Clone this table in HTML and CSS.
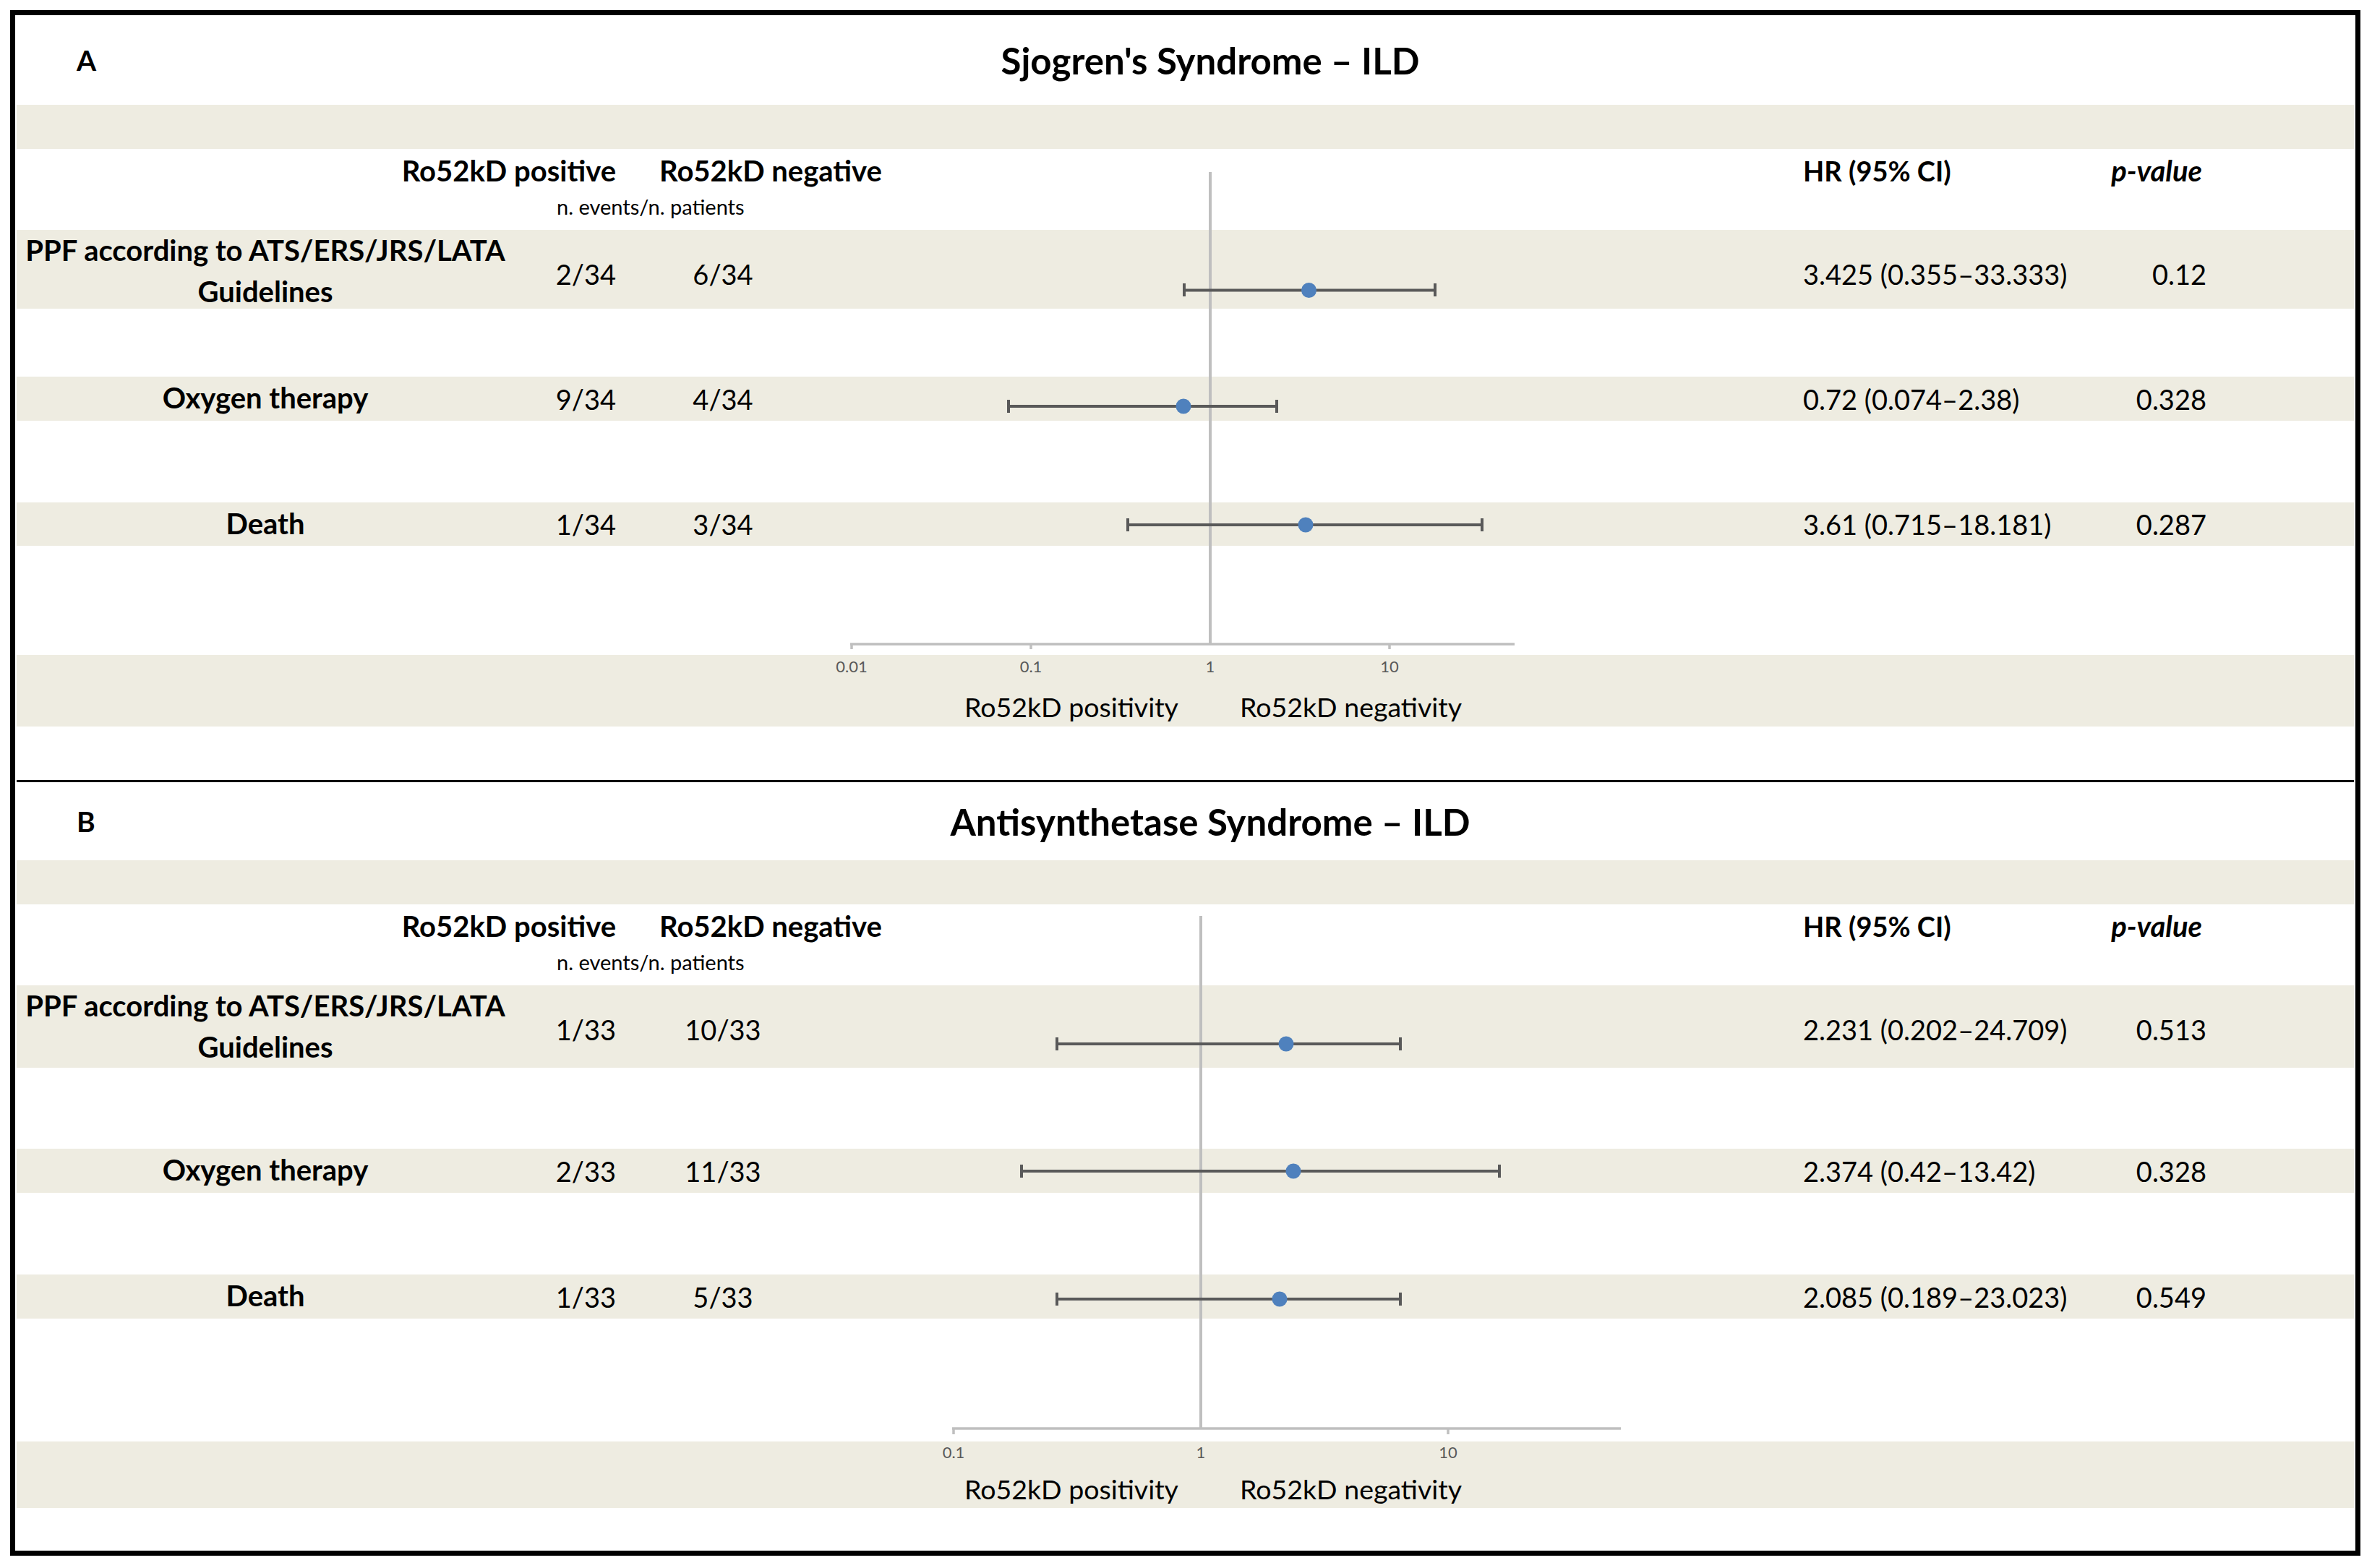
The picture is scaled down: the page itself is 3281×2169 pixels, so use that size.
FILE: index.html
```html
<!DOCTYPE html>
<html lang="en">
<head>
<meta charset="utf-8">
<title>Ro52kD forest plots</title>
<link rel="stylesheet" href="styles.css">
</head>
<body>
<div class="frame">
  <section class="panel panel-a">
    <svg class="plot" width="3233" height="1058" viewBox="23 21 3233 1058" xmlns="http://www.w3.org/2000/svg">
      <g class="grid-lines">
        <line class="ref" x1="1674" y1="238" x2="1674" y2="891"/>
        <line x1="1176" y1="891" x2="2095" y2="891"/>
        <line x1="1178" y1="891" x2="1178" y2="898"/>
        <line x1="1426" y1="891" x2="1426" y2="898"/>
        <line x1="1922" y1="891" x2="1922" y2="898"/>
      </g>
      <g class="ticks">
        <text x="1178" y="921">0.01</text>
        <text x="1426" y="921">0.1</text>
        <text x="1674" y="921">1</text>
        <text x="1922" y="921">10</text>
      </g>
      <g class="bars">
        <path d="M1638 401.5H1985M1638 392V410M1985 392V410"/>
        <path d="M1395 562H1766M1395 553V571M1766 553V571"/>
        <path d="M1560 726H2050M1560 717V735M2050 717V735"/>
      </g>
      <g class="dots">
        <circle cx="1810.5" cy="401.5" r="10.5"/>
        <circle cx="1637" cy="562" r="10.5"/>
        <circle cx="1806" cy="726" r="10.5"/>
      </g>
      <g class="axis-titles">
        <text x="1334" y="977">Ro52kD positivity</text>
        <text x="1715" y="977">Ro52kD negativity</text>
      </g>
    </svg>

    <div class="title-row">
      <span class="letter">A</span>
      <h1 class="title">Sjogren's Syndrome – ILD</h1>
    </div>
    <div class="band"></div>
    <div class="cols head">
      <span class="c2 hd">Ro52kD positive</span>
      <span class="c3 hd neg-hd">Ro52kD negative</span>
      <span class="c5 hd hr-hd">HR (95% CI)</span>
      <span class="c6 hd pv">p-value</span>
      <span class="sub">n. events/n. patients</span>
    </div>
    <div class="cols band">
      <span class="c1 lbl two">PPF according to ATS/ERS/JRS/LATA<br>Guidelines</span>
      <span class="c2">2/34</span>
      <span class="c3">6/34</span>
      <span class="c5">3.425 (0.355–33.333)</span>
      <span class="c6">0.12</span>
    </div>
    <div></div>
    <div class="cols band">
      <span class="c1 lbl">Oxygen therapy</span>
      <span class="c2">9/34</span>
      <span class="c3">4/34</span>
      <span class="c5">0.72 (0.074–2.38)</span>
      <span class="c6">0.328</span>
    </div>
    <div></div>
    <div class="cols band">
      <span class="c1 lbl">Death</span>
      <span class="c2">1/34</span>
      <span class="c3">3/34</span>
      <span class="c5">3.61 (0.715–18.181)</span>
      <span class="c6">0.287</span>
    </div>
    <div></div>
    <div class="band"></div>
    <div></div>
  </section>

  <div class="divider"></div>

  <section class="panel panel-b">
    <svg class="plot" width="3233" height="1063" viewBox="23 1082 3233 1063" xmlns="http://www.w3.org/2000/svg">
      <g class="grid-lines">
        <line class="ref" x1="1661" y1="1267" x2="1661" y2="1976"/>
        <line x1="1317" y1="1976" x2="2242" y2="1976"/>
        <line x1="1319" y1="1976" x2="1319" y2="1984"/>
        <line x1="2003" y1="1976" x2="2003" y2="1984"/>
      </g>
      <g class="ticks">
        <text x="1319" y="2008">0.1</text>
        <text x="1661" y="2008">1</text>
        <text x="2003" y="2008">10</text>
      </g>
      <g class="bars">
        <path d="M1462 1444H1937M1462 1435V1453M1937 1435V1453"/>
        <path d="M1413 1620H2074M1413 1611V1629M2074 1611V1629"/>
        <path d="M1462 1797H1937M1462 1788V1806M1937 1788V1806"/>
      </g>
      <g class="dots">
        <circle cx="1779" cy="1444" r="10.5"/>
        <circle cx="1789" cy="1620" r="10.5"/>
        <circle cx="1770" cy="1797" r="10.5"/>
      </g>
      <g class="axis-titles">
        <text x="1334" y="2059">Ro52kD positivity</text>
        <text x="1715" y="2059">Ro52kD negativity</text>
      </g>
    </svg>

    <div class="title-row">
      <span class="letter">B</span>
      <h1 class="title">Antisynthetase Syndrome – ILD</h1>
    </div>
    <div class="band"></div>
    <div class="cols head">
      <span class="c2 hd">Ro52kD positive</span>
      <span class="c3 hd neg-hd">Ro52kD negative</span>
      <span class="c5 hd hr-hd">HR (95% CI)</span>
      <span class="c6 hd pv">p-value</span>
      <span class="sub">n. events/n. patients</span>
    </div>
    <div class="cols band">
      <span class="c1 lbl two">PPF according to ATS/ERS/JRS/LATA<br>Guidelines</span>
      <span class="c2">1/33</span>
      <span class="c3">10/33</span>
      <span class="c5">2.231 (0.202–24.709)</span>
      <span class="c6">0.513</span>
    </div>
    <div></div>
    <div class="cols band">
      <span class="c1 lbl">Oxygen therapy</span>
      <span class="c2">2/33</span>
      <span class="c3">11/33</span>
      <span class="c5">2.374 (0.42–13.42)</span>
      <span class="c6">0.328</span>
    </div>
    <div></div>
    <div class="cols band">
      <span class="c1 lbl">Death</span>
      <span class="c2">1/33</span>
      <span class="c3">5/33</span>
      <span class="c5">2.085 (0.189–23.023)</span>
      <span class="c6">0.549</span>
    </div>
    <div></div>
    <div class="band"></div>
    <div></div>
  </section>
</div>
</body>
</html>
```

FILE: styles.css
```css
* { box-sizing: border-box; }

html, body {
  margin: 0;
  padding: 0;
  background: #ffffff;
}

body {
  font-family: Lato, "Liberation Sans", Arial, sans-serif;
  color: #000000;
  font-size: 38px;
}

.frame {
  margin: 14px 0 0 14px;
  width: 3251px;
  height: 2138px;
  border: 7px solid #000000;
  padding: 0 2px;
  display: flex;
  flex-direction: column;
}

.panel {
  position: relative;
  display: grid;
  grid-template-columns: 100%;
}

.panel-a {
  grid-template-rows: 124px 61px 112px 109px 94px 61px 113px 60px 151px 99px 74px;
}

.panel-b {
  grid-template-rows: 108px 61px 112px 114px 112px 61px 113px 61px 170px 92px 59px;
}

.divider {
  height: 3px;
  background: #000000;
}

.band {
  background: #EEECE1;
}

/* title row */
.title-row {
  display: grid;
  grid-template-columns: 100%;
  align-items: center;
}

.letter {
  grid-area: 1 / 1;
  padding-left: 83px;
  font-weight: 700;
  font-size: 39px;
}

.title {
  grid-area: 1 / 1;
  margin: 0;
  padding-left: 69px;
  text-align: center;
  font-size: 51px;
  font-weight: 700;
}

/* table rows */
.cols {
  display: grid;
  grid-template-columns: 688px 141px 296px 1346px 403px 155px 1fr;
  align-items: center;
  white-space: nowrap;
  line-height: 46px;
}

.c1 { grid-column: 1; text-align: center; }
.c2 { grid-column: 2; display: flex; justify-content: flex-end; }
.c3 { grid-column: 3; text-align: center; }
.c5 { grid-column: 5; }
.c6 { grid-column: 6; text-align: right; }

.lbl {
  font-weight: 700;
  font-size: 40px;
  line-height: 57px;
  padding-bottom: 2px;
}

.lbl.two {
  padding-bottom: 8px;
}

.head {
  grid-template-rows: 46px 34px;
  align-items: start;
  align-content: start;
  padding-top: 7px;
  row-gap: 10px;
}

.hd {
  grid-row: 1;
  font-weight: 700;
  font-size: 40px;
}

.hr-hd {
  font-size: 38px;
}

.neg-hd {
  text-align: left;
  padding-left: 60px;
}

.pv {
  font-style: italic;
  padding-right: 6px;
}

.sub {
  grid-row: 2;
  grid-column: 2 / 4;
  padding-left: 59px;
  font-size: 29px;
  line-height: 34px;
}

/* forest plot overlay */
.plot {
  position: absolute;
  left: 0;
  top: 0;
  width: 100%;
  height: 100%;
  pointer-events: none;
}

.grid-lines line {
  stroke: #BFBFBF;
  stroke-width: 3.5;
}

.grid-lines line.ref {
  stroke-width: 4;
}

.bars path {
  stroke: #595959;
  stroke-width: 4;
  fill: none;
}

.dots circle {
  fill: #4F81BD;
}

.ticks text {
  font-family: Lato, "Liberation Sans", Arial, sans-serif;
  font-size: 22px;
  fill: #595959;
  text-anchor: middle;
  dominant-baseline: central;
}

.axis-titles text {
  font-family: Lato, "Liberation Sans", Arial, sans-serif;
  font-size: 37.5px;
  fill: #000000;
  dominant-baseline: central;
}
```
